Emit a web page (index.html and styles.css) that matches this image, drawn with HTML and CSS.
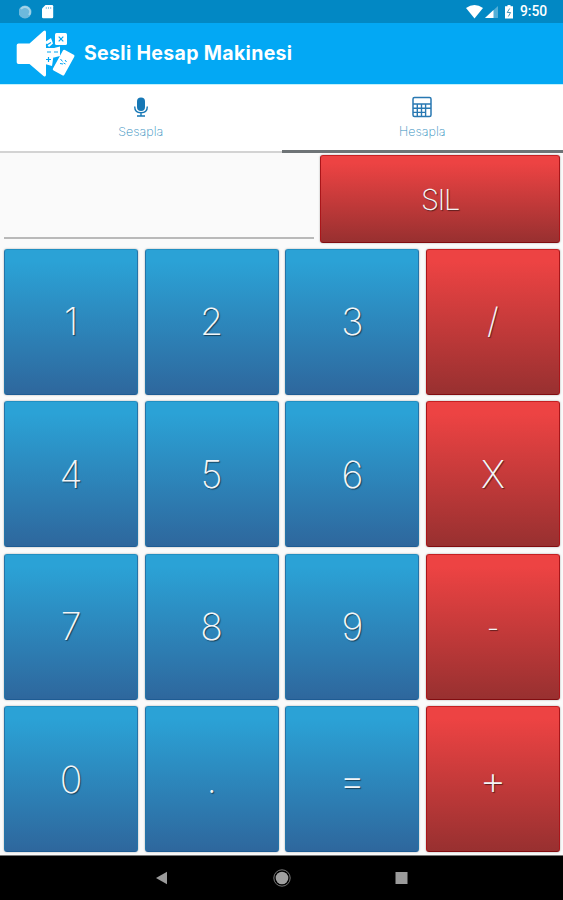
FILE: index.html
```html
<!DOCTYPE html>
<html lang="tr">
<head>
  <meta charset="UTF-8" />
  <meta name="viewport" content="width=device-width, initial-scale=1.0"/>
  <title>Sesli Hesap Makinesi</title>
  <link rel="stylesheet" href="styles.css">
</head>
<body>
  <div class="app">
    <!-- Status bar -->
    <div class="status-bar">
      <svg class="status-left" width="36" height="16" viewBox="0 0 36 16">
        <circle cx="6" cy="8" r="6.500" fill="#6db9dc"/>
        <path d="M2 5a5 5 0 0 1 8 6" fill="none" stroke="#a5d4e8" stroke-width="2"/>
        <path d="M26.500 1H33a1.200 1.200 0 0 1 1.200 1.200V13a1.200 1.200 0 0 1-1.200 1.200H24.200A1.200 1.200 0 0 1 23 13V4.500z" fill="#fff"/>
        <path d="M27.300 3v2M29.500 3v2M31.700 3v2" stroke="#8dc9e4" stroke-width="1"/>
      </svg>
      <svg class="status-right" width="50" height="16" viewBox="0 0 50 16">
        <path d="M0 4Q8.500-2 17 4L8.500 14.500z" fill="#fff"/>
        <path d="M19 14 32 2v12z" fill="#53afd7"/>
        <path d="M19 14l8.500-8v8z" fill="#fff"/>
        <path d="M41.500 1h3v1.300H47V14.500h-8V2.300h2.500z" fill="#fff"/>
        <path d="M43.700 4.500 41.200 8.500h3.400l-2.300 4" fill="none" stroke="#4998bb" stroke-width="1"/>
      </svg>
      <span class="clock">9:50</span>
    </div>

    <!-- App header -->
    <div class="header">
      <svg class="logo" width="60" height="50" viewBox="0 0 60 50">
        <path d="M2.500 14.500h11L27.500 2Q30 .5 30 3.500v42q0 3-2.500 1.500L13.500 35H2.500q-1.800 0-1.800-1.800v-17q0-1.700 1.800-1.700z" fill="#fff"/>
        <path d="M29 13l6-4 2 5.500-4 3.500zM29 19h9l6-1.500V27l-6 1.500h-9zM29 27h8.500l-1.500 10-7-2z" fill="#fff"/>
        <rect x="39" y="4" width="12" height="12" rx="1.500" fill="#fff"/>
        <path d="M42.700 7.700l4.600 4.600M47.300 7.700l-4.600 4.600M30 16.500l5-3M31 23h4M38 23h4M32.500 28v5M30 30.500h5" stroke="#03a5f2" stroke-width="1.200"/>
        <rect x="41.500" y="22" width="13" height="23.500" rx="1.500" fill="#fff" transform="rotate(29 48 33)"/>
        <path d="M44.500 30l2 2.500M49 31l1.500 2M44 34.500l3 .5M47.500 34l2 1" stroke="#03a5f2" stroke-width="1"/>
      </svg>
      <h1>Sesli Hesap Makinesi</h1>
    </div>

    <!-- Tabs -->
    <div class="tabs">
      <button class="tab">
        <svg width="20" height="22" viewBox="0 0 20 22">
          <rect x="6" y="1.500" width="8" height="13.500" rx="4" fill="#1677b5"/>
          <path d="M3.700 10.500c0 4 2.500 6.200 6.300 6.200s6.300-2.200 6.300-6.200M10 16.700V20M6 20h8" fill="none" stroke="#1677b5" stroke-width="1.400"/>
        </svg>
        <span>Sesapla</span>
      </button>
      <button class="tab active">
        <svg width="20" height="22" viewBox="0 0 20 22">
          <rect x="1" y="1.500" width="18" height="19" rx="1.500" fill="none" stroke="#2878b2" stroke-width="1.500"/>
          <path d="M1 8h18M1 12.300h18M1 16.400h12.500M5.300 8v12.500M9.500 8v12.500M13.600 8v12.500" stroke="#2878b2" stroke-width="1.400"/>
        </svg>
        <span>Hesapla</span>
      </button>
    </div>

    <!-- Calculator -->
    <div class="calculator">
      <div class="top-row">
        <div class="display"></div>
        <button class="key red clear">SIL</button>
      </div>
      <div class="keypad">
        <button class="key">1</button>
        <button class="key">2</button>
        <button class="key">3</button>
        <button class="key red divide">/</button>
        <button class="key">4</button>
        <button class="key">5</button>
        <button class="key">6</button>
        <button class="key red">X</button>
        <button class="key">7</button>
        <button class="key">8</button>
        <button class="key">9</button>
        <button class="key red minus">-</button>
        <button class="key">0</button>
        <button class="key">.</button>
        <button class="key sign">=</button>
        <button class="key red sign">+</button>
      </div>
    </div>

    <!-- Navigation bar -->
    <div class="nav-bar">
      <svg width="20" height="20" viewBox="0 0 20 20"><path d="M4 10 15 3.800v12.400z" fill="#9b9b9b"/></svg>
      <svg width="20" height="20" viewBox="0 0 20 20">
        <circle cx="10" cy="10" r="8.200" fill="none" stroke="#777" stroke-width="1"/>
        <circle cx="10" cy="10" r="6.300" fill="#a0a0a0"/>
      </svg>
      <svg width="20" height="20" viewBox="0 0 20 20"><rect x="3.500" y="4" width="12" height="12" fill="#9b9b9b"/></svg>
    </div>
  </div>
</body>
</html>
```

FILE: styles.css
```css
* {
  margin: 0;
  padding: 0;
  box-sizing: border-box;
}

body {
  font-family: Inter, 'Liberation Sans', sans-serif;
  background: #fafafa;
}

.app {
  display: flex;
  flex-direction: column;
  height: 900px;
  overflow: hidden;
}

.status-bar {
  display: flex;
  align-items: center;
  height: 23px;
  padding: 0 15px 0 19px;
  background: #0288c4;
  color: white;
}

.status-right {
  margin-left: auto;
}

.clock {
  width: 28px;
  margin-left: 4px;
  font-family: Roboto, sans-serif;
  font-size: 13.8px;
  font-weight: 500;
  line-height: 23px;
  white-space: nowrap;
}

.header {
  display: flex;
  align-items: center;
  height: 61px;
  padding-left: 16px;
  background: #03a8f4;
  color: white;
}

.header h1 {
  margin: -2px 0 0 8px;
  font-size: 19.5px;
  font-weight: 700;
  letter-spacing: 0.33px;
  white-space: nowrap;
}

.tabs {
  display: flex;
  height: 69px;
  background: white;
  border-top: 1px solid #c2f2fc;
}

.tab {
  flex: 1;
  display: flex;
  flex-direction: column;
  align-items: center;
  padding-top: 11px;
  border: none;
  border-bottom: 2px solid #d3d3d3;
  background: none;
  color: #338fc0;
  font-family: inherit;
  font-size: 12.5px;
  font-weight: 200;
}

.tab span {
  margin-top: 6px;
  line-height: 16px;
}

.tab.active {
  border-bottom: 3px solid #6e7376;
}

.calculator {
  flex: 1;
  display: flex;
  flex-direction: column;
  gap: 6px;
  padding: 2px 3px 3px 4px;
}

.top-row {
  display: flex;
  gap: 6px;
  height: 88px;
}

.display {
  flex: 1;
  height: 84px;
  border-bottom: 2px solid #b9b9b9;
}

.keypad {
  flex: 1;
  display: grid;
  grid-template-columns: repeat(4, 1fr);
  grid-template-rows: repeat(4, 1fr);
  gap: 6.5px;
}

.key {
  border: 1px solid;
  border-color: #218fc2 #2474a8 #1e5c94;
  border-radius: 3px;
  background: linear-gradient(#2ba2d6 8%, #2e679d);
  box-shadow: 0 0 2px rgba(0, 0, 0, 0.35);
  color: #f3f6f8;
  font-family: inherit;
  font-size: 37.5px;
  font-weight: 200;
  text-shadow: 1px 1px 1px rgba(0, 0, 0, 0.5);
}

.key.red {
  border-color: #c51f22 #aa1519 #820c10;
  background: linear-gradient(#ed4343 8%, #983030);
}

.key.clear {
  width: 240px;
  font-size: 29px;
  letter-spacing: -1.2px;
}

.key.divide {
  padding-bottom: 3px;
  font-size: 35px;
}

.key.minus {
  padding-top: 3px;
  font-size: 28px;
}

.key.sign {
  padding-top: 2px;
  font-size: 41px;
}

.nav-bar {
  display: flex;
  justify-content: center;
  align-items: center;
  gap: 100px;
  height: 45px;
  border-top: 1px solid #777;
  background: black;
}
```
